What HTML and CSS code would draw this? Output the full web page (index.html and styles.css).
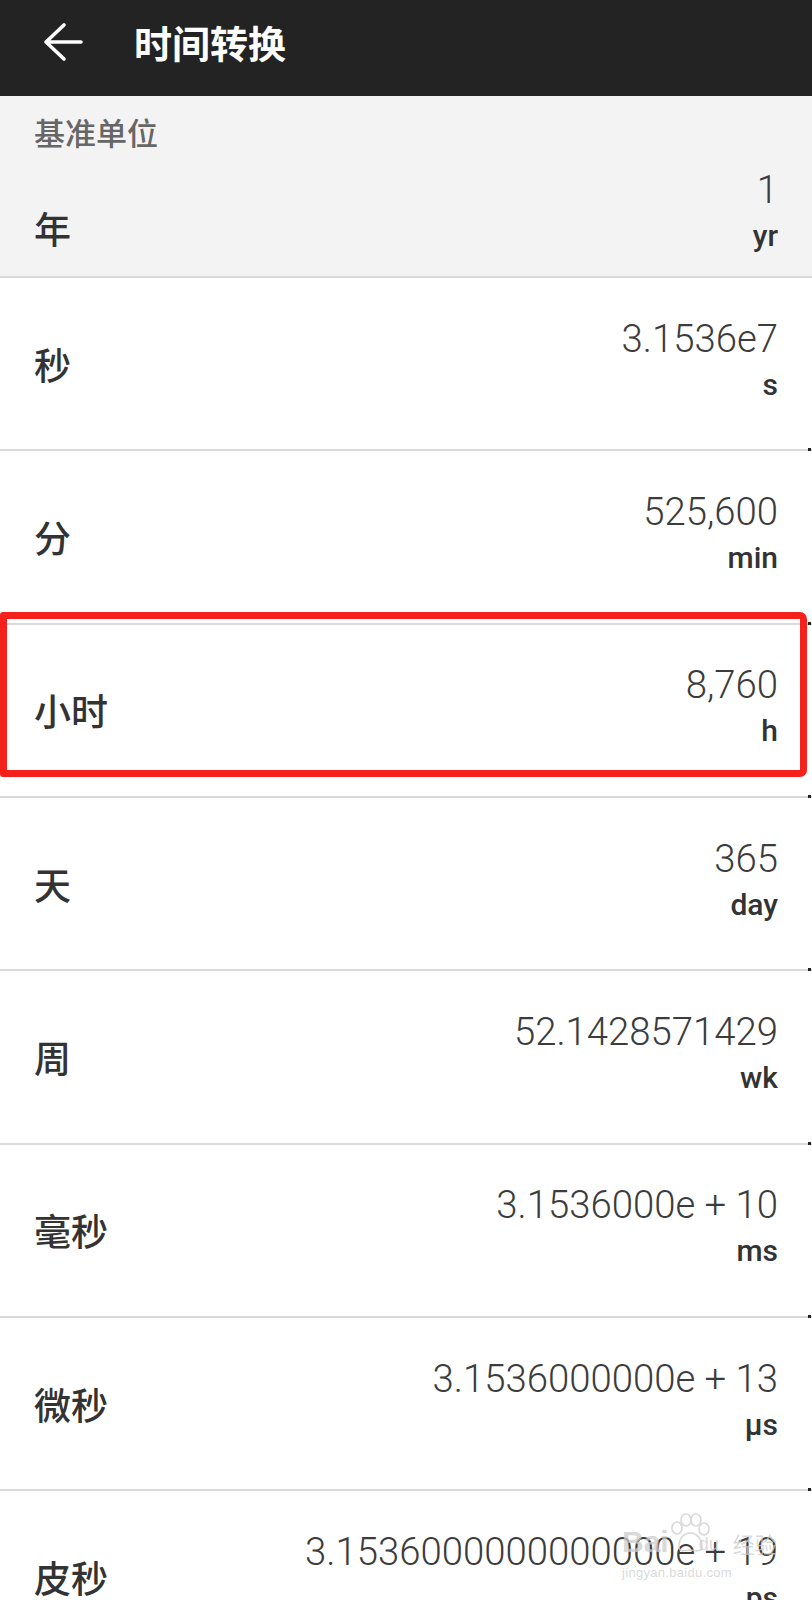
FILE: index.html
```html
<!DOCTYPE html>
<html lang="zh-CN">
<head>
<meta charset="utf-8">
<title>时间转换</title>
<link rel="stylesheet" href="styles.css">
</head>
<body>
<div class="page">
  <header class="topbar">
    <svg class="back" viewBox="0 0 48 48" width="48" height="48" aria-hidden="true">
      <path d="M7 24 H42 M25 7 L7 24 L25 41" fill="none" stroke="#fff" stroke-width="3.6" stroke-linecap="round" stroke-linejoin="round"/>
    </svg>
    <h1 class="title">时间转换</h1>
  </header>

  <section class="base">
    <div class="base-caption">基准单位</div>
    <div class="base-row">
      <div class="label">年</div>
      <div class="values">
        <div class="val">1</div>
        <div class="unit">yr</div>
      </div>
    </div>
  </section>

  <div class="list">
    <div class="row">
      <div class="label">秒</div>
      <div class="values"><div class="val">3.1536e7</div><div class="unit">s</div></div>
    </div>
    <div class="row">
      <div class="label">分</div>
      <div class="values"><div class="val">525,600</div><div class="unit">min</div></div>
    </div>
    <div class="row highlighted">
      <div class="label">小时</div>
      <div class="values"><div class="val">8,760</div><div class="unit">h</div></div>
      <div class="redbox"></div>
    </div>
    <div class="row">
      <div class="label">天</div>
      <div class="values"><div class="val">365</div><div class="unit">day</div></div>
    </div>
    <div class="row">
      <div class="label">周</div>
      <div class="values"><div class="val">52.1428571429</div><div class="unit">wk</div></div>
    </div>
    <div class="row">
      <div class="label">毫秒</div>
      <div class="values"><div class="val">3.1536000e + 10</div><div class="unit">ms</div></div>
    </div>
    <div class="row">
      <div class="label">微秒</div>
      <div class="values"><div class="val">3.1536000000e + 13</div><div class="unit">µs</div></div>
    </div>
    <div class="row">
      <div class="label">皮秒</div>
      <div class="values"><div class="val">3.1536000000000000e + 19</div><div class="unit">ps</div></div>
      <div class="watermark">
        <div class="wm-top"><span class="wm-bai">Bai</span><svg class="wm-paw" viewBox="0 0 46 40" width="46" height="40" aria-hidden="true"><g fill="none" stroke="#cfcfcf" stroke-width="1.6"><ellipse cx="10" cy="15" rx="5" ry="6"/><ellipse cx="19" cy="7" rx="5" ry="6"/><ellipse cx="29" cy="7" rx="5" ry="6"/><ellipse cx="37" cy="16" rx="5" ry="6"/><path d="M12 34 C12 24 18 20 23 20 C29 20 35 25 35 34 C35 39 28 38 23 37 C18 38 12 39 12 34 Z"/></g></svg><span class="wm-du">du</span><span class="wm-jy">经验</span></div>
        <div class="wm-url">jingyan.baidu.com</div>
      </div>
    </div>
  </div>
</div>
</body>
</html>
```

FILE: styles.css
```css
* { box-sizing: border-box; }

html, body {
  margin: 0;
  padding: 0;
  background: #ffffff;
}

body {
  font-family: "Noto Sans CJK SC", "Noto Sans", sans-serif;
  color: #333333;
}

.page {
  width: 812px;
}

.topbar {
  height: 96px;
  background: #232323;
  display: flex;
  align-items: center;
  padding: 0 0 12px 39px;
}

.back {
  display: block;
  flex: none;
}

.title {
  margin: 0 0 0 47px;
  font-size: 38px;
  font-weight: 700;
  color: #ffffff;
  line-height: 1;
}

.base {
  height: 182px;
  background: #f3f3f3;
  border-bottom: 2px solid #dadada;
  padding: 16px 34px 0 34px;
}

.base-caption {
  font-size: 31px;
  line-height: 40px;
  color: #666666;
  font-weight: 500;
}

.base-row {
  display: flex;
  justify-content: space-between;
  align-items: flex-end;
  margin-top: 16px;
}

.base-row .label {
  padding-bottom: 7px;
}

.base-row .values {
  padding-bottom: 0;
}

.list {
  display: flex;
  flex-direction: column;
}

.row {
  position: relative;
  height: 173.33px;
  border-bottom: 2px solid #dadada;
  display: flex;
  justify-content: space-between;
  align-items: center;
  padding: 0 34px 0 34px;
}

.label {
  font-size: 37px;
  line-height: 44px;
  font-weight: 500;
  color: #333333;
}

.values {
  text-align: right;
  font-family: Roboto, "Liberation Sans", sans-serif;
  padding-bottom: 5px;
}

.val {
  font-size: 38.3px;
  font-weight: 300;
  line-height: 44px;
  color: #3c3c3c;
  white-space: nowrap;
}

.unit {
  font-size: 30px;
  font-weight: 500;
  line-height: 42px;
  margin-top: 3px;
  color: #333333;
}

.redbox {
  position: absolute;
  left: 0;
  top: -13px;
  width: 807px;
  height: 165px;
  border: 7px solid #f4221b;
  border-radius: 3px 7px 7px 3px;
  pointer-events: none;
}

.row::after {
  content: "";
  position: absolute;
  right: 1px;
  bottom: -2px;
  width: 3px;
  height: 3px;
  background: #222222;
}

.row:last-child::after {
  display: none;
}

.watermark {
  position: absolute;
  left: 622px;
  top: 20px;
  color: rgba(205, 205, 205, 0.75);
  font-family: "Liberation Sans", sans-serif;
  pointer-events: none;
}

.wm-top {
  display: flex;
  align-items: flex-end;
  height: 46px;
}

.wm-bai {
  font-size: 30px;
  font-weight: 700;
  line-height: 30px;
}

.wm-paw {
  display: block;
  margin: 0 -14px 4px -2px;
  opacity: 0.8;
}

.wm-du {
  font-size: 18px;
  line-height: 22px;
  margin-bottom: 2px;
}

.wm-jy {
  font-family: "Noto Sans CJK SC", sans-serif;
  font-size: 22px;
  line-height: 28px;
  margin-left: 14px;
}

.wm-url {
  font-size: 13px;
  line-height: 16px;
  margin-top: 8px;
  letter-spacing: 0.3px;
}
```
